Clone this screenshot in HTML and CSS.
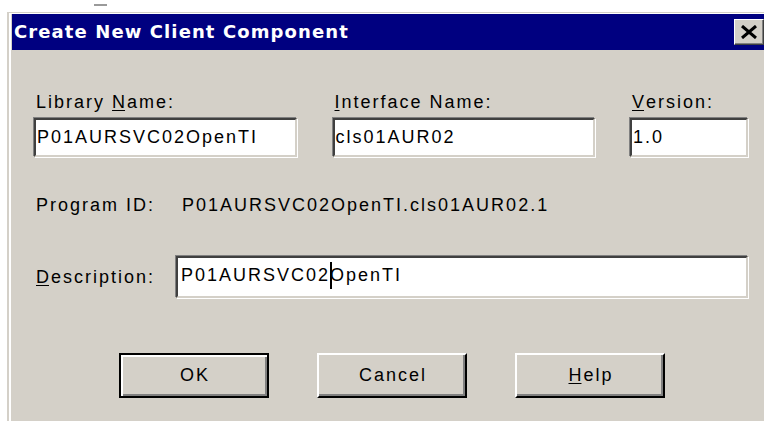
FILE: index.html
```html
<!DOCTYPE html>
<html lang="en">
<head>
<meta charset="utf-8">
<title>Create New Client Component</title>
<link rel="stylesheet" href="styles.css">
</head>
<body>
<div class="desk"><span class="speck"></span></div>
<div class="window">
  <div class="titlebar">
    <span class="title">Create New Client Component</span>
    <button class="close" type="button" aria-label="Close">
      <svg width="18" height="14" viewBox="0 0 18 14" aria-hidden="true">
        <path d="M2 1 L16 13 M16 1 L2 13" stroke="#000" stroke-width="3" fill="none"/>
      </svg>
    </button>
  </div>
  <div class="panel">
    <div class="names">
      <div class="group">
        <label class="label">Library <u>N</u>ame:</label>
        <div class="edit">P01AURSVC02OpenTI</div>
      </div>
      <div class="group">
        <label class="label"><u>I</u>nterface Name:</label>
        <div class="edit">cls01AUR02</div>
      </div>
      <div class="group">
        <label class="label"><u>V</u>ersion:</label>
        <div class="edit">1.0</div>
      </div>
    </div>
    <div class="row progid">
      <span class="label">Program ID:</span>
      <span class="value">P01AURSVC02OpenTI.cls01AUR02.1</span>
    </div>
    <div class="row desc">
      <span class="label"><u>D</u>escription:</span>
      <div class="edit tall">P01AURSVC02<span class="caret"></span>OpenTI</div>
    </div>
    <div class="buttons">
      <button class="btn default" type="button">OK</button>
      <button class="btn" type="button">Cancel</button>
      <button class="btn" type="button"><u>H</u>elp</button>
    </div>
  </div>
</div>
</body>
</html>
```
FILE: styles.css
```css
html, body {
  margin: 0;
  padding: 0;
  background: #fff;
  overflow: hidden;
}

body {
  width: 764px;
  height: 421px;
  font-family: "Liberation Sans", Arial, sans-serif;
  font-size: 18px;
  letter-spacing: 2px;
  color: #000;
}

/* strip of desktop above the dialog */
.desk {
  height: 12px;
  display: flex;
}

.speck {
  width: 13px;
  height: 2px;
  margin: 4px 0 0 94px;
  background: #9a9a9a;
}

/* dialog frame */
.window {
  margin-left: 7px;
  width: 757px;
  height: 409px;
  box-sizing: border-box;
  background: #d4d0c8;
  border-top: 1px solid #d4d0c8;
  border-left: 2px solid #d4d0c8;
  box-shadow: inset 2px 1px 0 #fff;
  padding: 1px 0 0 3px;
}

.titlebar {
  height: 36px;
  background: #000080;
  display: flex;
  align-items: center;
  justify-content: space-between;
  padding-left: 2px;
}

.title {
  color: #fff;
  font-family: "DejaVu Sans", Verdana, sans-serif;
  font-weight: bold;
  font-size: 18px;
  letter-spacing: 1.1px;
  line-height: 20px;
  white-space: nowrap;
}

.close {
  width: 30px;
  height: 26px;
  padding: 0;
  margin: 0;
  background: #d4d0c8;
  border: 1px solid;
  border-color: #fff #404040 #404040 #fff;
  box-shadow: inset -1px -1px 0 #808080;
  display: flex;
  align-items: center;
  justify-content: center;
}

/* dialog contents */
.panel {
  padding: 42px 16px 0 22px;
}

.label {
  display: block;
  line-height: 20px;
  padding-left: 2px;
  white-space: nowrap;
}

u {
  letter-spacing: 0;
  margin-right: 2px;
  text-underline-offset: 2px;
}

.names {
  display: grid;
  grid-template-columns: 263px 262px 118px;
  justify-content: space-between;
}

.group .label {
  margin-bottom: 6px;
}

.edit {
  height: 39px;
  box-sizing: border-box;
  background: #fff;
  border: 2px solid;
  border-color: #404040 #d4d0c8 #d4d0c8 #404040;
  box-shadow: -1px -1px 0 #808080, 1px 1px 0 #fff;
  display: flex;
  align-items: center;
  padding: 0 0 1px 1px;
  white-space: nowrap;
  overflow: hidden;
}

.row {
  display: grid;
  grid-template-columns: 142px 1fr;
  align-items: center;
}

.progid {
  margin-top: 38px;
  line-height: 20px;
}

.progid .value {
  padding-left: 6px;
  white-space: nowrap;
}

.desc {
  margin-top: 41px;
}

.edit.tall {
  height: 42px;
  padding: 0 0 4px 3px;
}

.caret {
  display: inline-block;
  width: 2px;
  height: 27px;
  margin-right: -2px;
  background: #000;
  vertical-align: middle;
}

.buttons {
  display: flex;
  justify-content: center;
  gap: 48px;
  margin-top: 55px;
  padding-left: 2px;
}

.btn {
  width: 150px;
  height: 45px;
  box-sizing: border-box;
  margin: 0;
  padding: 0 0 0 2px;
  background: #d4d0c8;
  font-family: inherit;
  font-size: 18px;
  letter-spacing: 2px;
  color: #000;
  border: 2px solid;
  border-color: #fff #000 #000 #fff;
  box-shadow: inset -2px -2px 0 #808080;
}

.btn.default {
  border-color: #000;
  box-shadow: inset 2px 2px 0 #fff, inset -2px -2px 0 #808080;
}
```
